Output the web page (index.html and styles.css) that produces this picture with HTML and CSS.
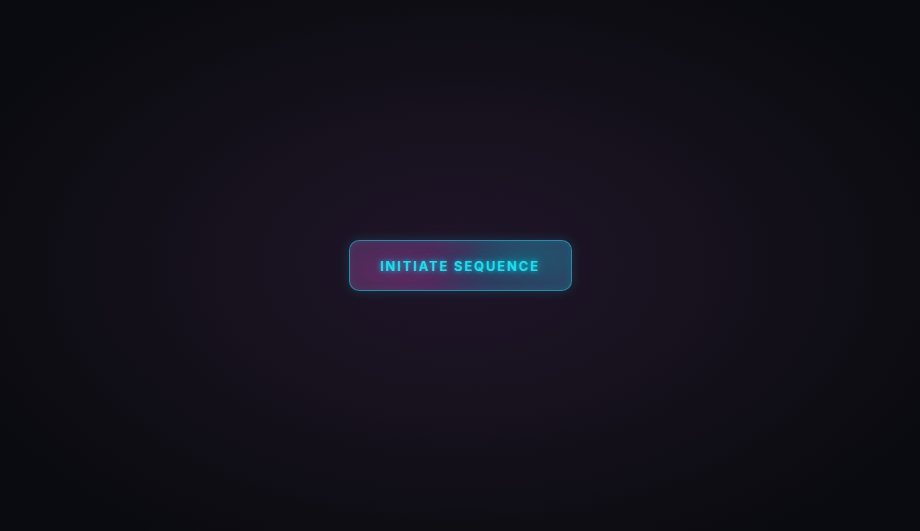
FILE: index.html
```html
<!DOCTYPE html>
<html lang="en">
<head>
<meta charset="utf-8">
<title>Initiate</title>
<link rel="stylesheet" href="styles.css">
</head>
<body>
  <main class="stage">
    <button class="neon-btn" type="button">Initiate Sequence</button>
  </main>
</body>
</html>
```
FILE: styles.css
```css
html, body {
  margin: 0;
  height: 100%;
}

body {
  background: radial-gradient(ellipse 58% 62% at 50% 50%, #1f1529 0%, #18121f 40%, #0e0d14 80%, #0a0b10 100%);
  font-family: Inter, "Noto Sans", sans-serif;
}

.stage {
  height: 100%;
  display: flex;
  align-items: center;
  justify-content: center;
}

.neon-btn {
  width: 223px;
  height: 51px;
  padding: 0 26px;
  border-radius: 10px;
  border: 1px solid rgba(30, 170, 190, 0.75);
  background:
    radial-gradient(ellipse 40% 75% at 22% 60%, rgba(120, 40, 110, 0.45), transparent 70%),
    radial-gradient(ellipse 40% 75% at 78% 35%, rgba(20, 110, 130, 0.45), transparent 70%),
    linear-gradient(90deg, #4a2b55 0%, #4c2b5c 38%, #2f3d60 62%, #284866 100%);
  box-shadow: 0 0 12px rgba(34, 211, 238, 0.18), inset 0 0 8px rgba(34, 211, 238, 0.1);
  color: #14e2f2;
  font-family: Inter, "Noto Sans", sans-serif;
  font-weight: 700;
  font-size: 13px;
  letter-spacing: 1.8px;
  text-transform: uppercase;
  text-shadow: 0 0 5px rgba(20, 225, 242, 0.75), 0 0 12px rgba(20, 211, 238, 0.35);
  cursor: pointer;
}
```
